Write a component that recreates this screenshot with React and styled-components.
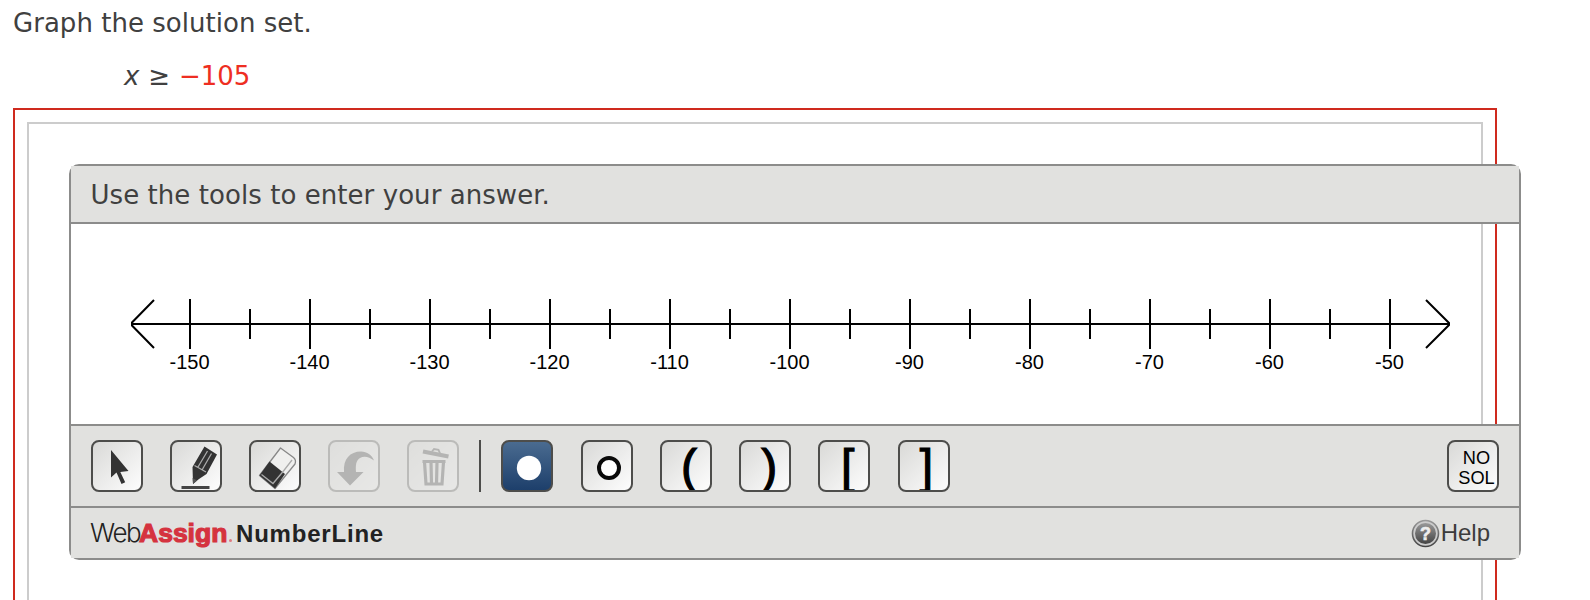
import { createGlobalStyle, styled } from "styled-components";

const GlobalStyle = createGlobalStyle`
  * {
    box-sizing: border-box;
  }

  body {
    margin: 0;
    background-color: #fff;
    overflow: hidden;
  }
`;

const sans = `"Liberation Sans", Arial, sans-serif`;
const verdana = `"DejaVu Sans", Verdana, sans-serif`;

const Page = styled.main`
  height: 600px;
  padding: 7px 0 0 13px;
  overflow: hidden;
  font-family: ${verdana};
  font-size: 26px;
  color: #404040;
`;

const Question = styled.p`
  height: 32px;
  margin: 0;
  line-height: 32px;
  letter-spacing: 0.03px;
  white-space: nowrap;
`;

const Equation = styled.p`
  height: 32px;
  margin: 21px 0 16px 111px;
  line-height: 32px;
  word-spacing: 0.6px;
`;

const Value = styled.span`
  color: #ee2e22;
`;

const AnswerBorder = styled.section`
  width: 1484px;
  height: 600px;
  padding: 12px;
  border: 2px solid #cf2a1e;
`;

const AnswerBox = styled.div`
  height: 600px;
  padding: 40px;
  border: 2px solid #ccc;
`;

const Widget = styled.div`
  width: 1452px;
  height: 396px;
  border: 2px solid #8c8c8b;
  border-radius: 10px;
`;

const Header = styled.header`
  height: 58px;
  padding-left: 19.5px;
  background-color: #e1e1df;
  border-bottom: 2px solid #8c8c8b;
  line-height: 59px;
  letter-spacing: 0.06px;
  white-space: nowrap;
`;

const Graph = styled.svg`
  display: block;
  width: 1448px;
  height: 200px;
  font-family: ${sans};
  font-size: 20px;
`;

const Toolbar = styled.div`
  display: flex;
  align-items: center;
  height: 84px;
  padding: 0 20px;
  background-color: #e1e1df;
  border-top: 2px solid #8c8c8b;
  border-bottom: 2px solid #8c8c8b;
`;

const ToolGroup = styled.div`
  display: flex;
  gap: ${(props) => props.$gap || 27}px;
`;

const Btn = styled.button`
  width: 52px;
  height: 52px;
  padding: 0;
  border: 2px solid #4d4d4b;
  border-radius: 8px;
  overflow: hidden;
  opacity: ${(props) => (props.disabled ? 0.25 : 1)};
  background: ${(props) =>
    props.$selected
      ? "linear-gradient(#4a6b90, #1d3f6b)"
      : "linear-gradient(135deg, #d9d9d7, #fdfdfd)"};
  color: #000;

  svg {
    display: block;
  }
`;

const Glyph = styled.span`
  display: block;
  height: 48px;
  padding-left: ${(props) => props.$indent}px;
  font: 48px/50px ${sans};
  text-align: left;
  -webkit-text-stroke: 1.2px #000;
`;

const Divider = styled.div`
  width: 2px;
  height: 52px;
  margin: 0 20.4px 0 20px;
  background-color: #4d4d4b;
`;

const NoSolution = styled(Btn)`
  margin-left: auto;
  padding: 3px 0 0 7px;
  font: 18.2px/20px ${sans};
`;

const Footer = styled.footer`
  display: flex;
  align-items: center;
  justify-content: space-between;
  height: 50px;
  padding: 0 29px 0 19px;
  background-color: #e1e1df;
  font-family: ${sans};
`;

const Brand = styled.div`
  display: flex;
  align-items: baseline;
  line-height: 50px;
  color: #222;
`;

const Web = styled.span`
  width: 49px;
  font-family: Inter, ${sans};
  font-size: 26px;
  font-weight: 300;
  letter-spacing: -1.4px;
`;

const Assign = styled.span`
  width: 89px;
  font-size: 26.5px;
  font-weight: bold;
  color: #d5333f;
  -webkit-text-stroke: 1.2px #d5333f;
`;

const Dot = styled.span`
  width: 3px;
  height: 3px;
  margin: 0 4px 0 1px;
  border-radius: 50%;
  background-color: #df7b80;
`;

const Product = styled.span`
  font-size: 24px;
  font-weight: bold;
  letter-spacing: 0.8px;
`;

const Help = styled.div`
  display: flex;
  align-items: center;
  gap: 1px;
  font-size: 24px;
  color: #3c3c3c;
`;

const Icon = ({ children }) => (
  <svg width="48" height="48" viewBox="2 2 48 48" fill="#333">
    {children}
  </svg>
);

const Pointer = () => (
  <Icon>
    <path d="M20 10v27.5l5.5-5 5 11.5 3.7-1.7L29.3 32l8.2-1z" />
  </Icon>
);

const Pencil = () => (
  <Icon>
    <path d="M34.5 6.5L47 14.5 36.5 34 29 39l-6 5-.5-17z" />
    <path
      d="M37.5 11L28 27M41.5 13.5L32 30M24.5 25.500l11.500 6.500"
      fill="none"
      stroke="#aaa"
      strokeWidth="1.3"
    />
    <path d="M22.500 38l4.500 2.500-4 3.500z" fill="#555" />
    <path d="M11.500 46h28v3h-28z" fill="#444" />
  </Icon>
);

const Eraser = () => (
  <Icon>
    <path
      d="M31.5 8l13 9.5q3 2.5 1.5 6.5L26 48.5 10.500 35.500z"
      fill="#efefee"
      stroke="#888"
      strokeWidth="1.3"
      strokeLinejoin="round"
    />
    <path d="M20.500 21.500L36 34 26 48.500 10.500 35.500z" />
    <path
      d="M12.500 34.500L24 43.500 34.500 31 43 20"
      fill="none"
      stroke="#aaa"
      strokeWidth="1.3"
    />
  </Icon>
);

const Undo = () => (
  <Icon>
    <path d="M9 32h7C15 19 22 11.500 33 11.500c6 0 11 3.500 13 9-5-4-10-5-14-2.500-4 2.500-4.500 7-4 14h7.500L22 45.500z" />
  </Icon>
);

const Trash = () => (
  <Icon>
    <path d="M16 11.500L41.500 16.500" stroke="#333" strokeWidth="4" />
    <path
      d="M25 11.500l2-2.500 4.500.8 1.500 3.500"
      fill="none"
      stroke="#333"
      strokeWidth="1.8"
    />
    <path d="M15.500 20h23v3h-23z" />
    <path
      d="M17.500 22l1.500 22h16L36.500 22M24 22l.5 22M30 22l-.5 22"
      fill="none"
      stroke="#333"
      strokeWidth="3.2"
    />
  </Icon>
);

const ClosedPoint = () => (
  <Icon>
    <circle cx="28" cy="28" r="12.2" fill="#fff" />
  </Icon>
);

const OpenPoint = () => (
  <Icon>
    <circle cx="28" cy="28" r="10" fill="#fff" stroke="#0a0a0a" strokeWidth="4" />
  </Icon>
);

const HelpIcon = () => (
  <svg width="29" height="29" viewBox="0 0 29 29">
    <defs>
      <linearGradient id="helpFill" x2="0" y2="1">
        <stop offset="0" stopColor="#999" />
        <stop offset="1" stopColor="#444" />
      </linearGradient>
    </defs>
    <circle cx="14.5" cy="14.5" r="13" fill="#ccc" stroke="url(#helpFill)" strokeWidth="1.6" />
    <circle cx="14.5" cy="14.5" r="10.5" fill="url(#helpFill)" />
    <text
      x="14.5"
      y="20.8"
      fill="#eee"
      stroke="#eee"
      strokeWidth="0.6"
      fontFamily="Liberation Sans"
      fontSize="18"
      fontWeight="bold"
      textAnchor="middle"
    >
      ?
    </text>
  </svg>
);

const labels = [-150, -140, -130, -120, -110, -100, -90, -80, -70, -60, -50];

const NumberLine = () => (
  <Graph viewBox="0 0 1448 200">
    <g fill="none" stroke="#000" strokeWidth="2">
      <path d="M60 100H1379" />
      <path d="M83 76L61 98.500v3l22 22.500M1355 76l23 23v2l-23 23" />
      {labels.map((label, i) => (
        <path key={label} d={`M${119 + i * 120} 75v50`} />
      ))}
      {labels.slice(1).map((label, i) => (
        <path key={label} d={`M${179 + i * 120} 85v30`} />
      ))}
    </g>
    {labels.map((label, i) => (
      <text key={label} x={118.5 + i * 120} y="145" textAnchor="middle">
        {label}
      </text>
    ))}
  </Graph>
);

export default function App() {
  return (
    <>
      <GlobalStyle />
      <Page>
        <Question>Graph the solution set.</Question>
        <Equation>
          <i>x</i> ≥ <Value>−105</Value>
        </Equation>
        <AnswerBorder>
          <AnswerBox>
            <Widget>
              <Header>Use the tools to enter your answer.</Header>
              <NumberLine />
              <Toolbar>
                <ToolGroup>
                  <Btn><Pointer /></Btn>
                  <Btn><Pencil /></Btn>
                  <Btn><Eraser /></Btn>
                  <Btn disabled><Undo /></Btn>
                  <Btn disabled><Trash /></Btn>
                </ToolGroup>
                <Divider />
                <ToolGroup $gap={27.25}>
                  <Btn $selected><ClosedPoint /></Btn>
                  <Btn><OpenPoint /></Btn>
                  <Btn><Glyph $indent={19}>(</Glyph></Btn>
                  <Btn><Glyph $indent={20}>)</Glyph></Btn>
                  <Btn><Glyph $indent={20.5}>[</Glyph></Btn>
                  <Btn><Glyph $indent={20}>]</Glyph></Btn>
                </ToolGroup>
                <NoSolution>
                  NO
                  <br />
                  SOL
                </NoSolution>
              </Toolbar>
              <Footer>
                <Brand>
                  <Web>Web</Web>
                  <Assign>Assign</Assign>
                  <Dot />
                  <Product>NumberLine</Product>
                </Brand>
                <Help>
                  <HelpIcon />
                  Help
                </Help>
              </Footer>
            </Widget>
          </AnswerBox>
        </AnswerBorder>
      </Page>
    </>
  );
}
